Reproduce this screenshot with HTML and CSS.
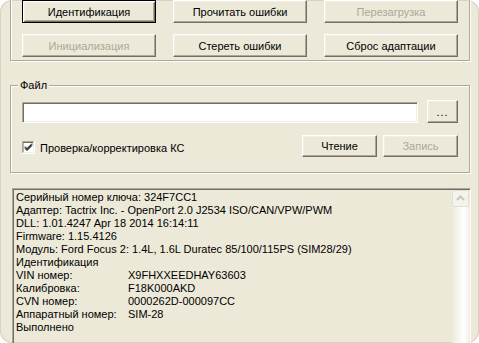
FILE: index.html
```html
<!DOCTYPE html>
<html lang="ru">
<head>
    <meta charset="UTF-8">
    <meta name="viewport" content="width=device-width, initial-scale=1.0">
    <title>Диагностика ЭБУ</title>
    <link rel="stylesheet" href="styles.css">
</head>
<body>
    <div class="frame">
        <div class="group group-top">
            <div class="btn-grid">
                <button class="btn btn-default">Идентификация</button>
                <button class="btn">Прочитать ошибки</button>
                <button class="btn" disabled>Перезагрузка</button>
                <button class="btn" disabled>Инициализация</button>
                <button class="btn">Стереть ошибки</button>
                <button class="btn">Сброс адаптации</button>
            </div>
        </div>

        <fieldset class="group group-file">
            <legend>Файл</legend>
            <div class="file-row">
                <input class="textbox" type="text">
                <button class="btn btn-browse">...</button>
            </div>
            <div class="check-row">
                <label class="check">
                    <svg class="check-box" width="13" height="13" viewBox="0 0 13 13">
                        <rect x="0" y="0" width="13" height="13" fill="#ffffff"/>
                        <path d="M0 12.5V0.5H12.5" fill="none" stroke="#aca899"/>
                        <path d="M1 11.5V1.5H11.5" fill="none" stroke="#716f64"/>
                        <path d="M0.5 13V12.5H12.5V0" fill="none" stroke="#ffffff"/>
                        <path d="M1.5 12V11.5H11.5V1" fill="none" stroke="#f1efe2"/>
                        <path d="M3 5.5L5 7.5L10 2.5M3 6.5L5 8.5L10 3.5M3 7.5L5 9.5L10 4.5" fill="none" stroke="#000000"/>
                    </svg>
                    Проверка/корректировка КС
                </label>
                <div class="check-buttons">
                    <button class="btn btn-small">Чтение</button>
                    <button class="btn btn-small" disabled>Запись</button>
                </div>
            </div>
        </fieldset>

        <div class="log">
            <div class="log-text">
                <div>Серийный номер ключа: 324F7CC1</div>
                <div>Адаптер: Tactrix Inc. - OpenPort 2.0 J2534 ISO/CAN/VPW/PWM</div>
                <div>DLL: 1.01.4247 Apr 18 2014 16:14:11</div>
                <div>Firmware: 1.15.4126</div>
                <div>Модуль: Ford Focus 2: 1.4L, 1.6L Duratec 85/100/115PS (SIM28/29)</div>
                <div>Идентификация</div>
                <div class="kv"><span>VIN номер:</span><span>X9FHXXEEDHAY63603</span></div>
                <div class="kv"><span>Калибровка:</span><span>F18K000AKD</span></div>
                <div class="kv"><span>CVN номер:</span><span>0000262D-000097CC</span></div>
                <div class="kv"><span>Аппаратный номер:</span><span>SIM-28</span></div>
                <div>Выполнено</div>
            </div>
            <div class="scrollbar">
                <svg class="scroll-up" width="17" height="17" viewBox="0 0 17 17">
                    <rect x="0.5" y="0.5" width="16" height="16" rx="2" fill="#f4f3ee" stroke="#e2dfd2"/>
                    <path d="M5 10L8.5 6.5L12 10" fill="none" stroke="#c9c7ba" stroke-width="2"/>
                </svg>
                <div class="scroll-track"></div>
            </div>
        </div>
    </div>
</body>
</html>
```

FILE: styles.css
```css
body {
    margin: 0;
    padding: 0;
    background-color: #ffffff;
    font-family: "Liberation Sans", Arial, sans-serif;
    font-size: 11px;
    color: #000000;
}

.frame {
    width: 479px;
    height: 343px;
    box-sizing: border-box;
    padding: 0 9px 0 10px;
    overflow: hidden;
    background-color: #ece9d8;
    border-radius: 12px;
    box-shadow: inset 0 0 0 1px #d6d3c4;
}

/* etched group borders */
.group {
    border: 1px solid #aca899;
    box-shadow: inset 1px 1px 0 #ffffff, 1px 1px 0 #ffffff;
}

.group-top {
    margin-top: -10px;
    padding: 9px 11px 3px 11px;
}

.btn-grid {
    display: grid;
    grid-template-columns: repeat(3, 134px);
    grid-auto-rows: 23px;
    column-gap: 17px;
    row-gap: 11px;
}

.btn {
    font-family: inherit;
    font-size: 11px;
    color: #000000;
    background-color: #ece9d8;
    border: 1px solid;
    border-color: #ffffff #716f64 #716f64 #ffffff;
    box-shadow: inset -1px -1px 0 #aca899, inset 1px 1px 0 #f1efe2;
    padding: 0;
    margin: 0;
    height: 23px;
    box-sizing: border-box;
}

.btn-default {
    border-color: #000000;
    box-shadow: inset 1px 1px 0 #ffffff, inset -1px -1px 0 #716f64, inset 2px 2px 0 #f1efe2, inset -2px -2px 0 #aca899;
}

.btn:disabled {
    color: #aca899;
}

.group-file {
    margin: 18px 0 0 0;
    padding: 8px 11px 15px 11px;
    min-width: 0;
}

.group-file legend {
    padding: 0 2px;
    margin-left: -4px;
    line-height: 13px;
    background-color: #ece9d8;
}

.file-row {
    display: flex;
    align-items: flex-start;
}

.textbox {
    width: 396px;
    height: 21px;
    margin: 2px 0 0 0;
    padding: 0 3px;
    box-sizing: border-box;
    background-color: #ffffff;
    border: 1px solid;
    border-color: #aca899 #ffffff #ffffff #aca899;
    box-shadow: inset 1px 1px 0 #716f64, inset -1px -1px 0 #f1efe2;
    font-family: inherit;
    font-size: 11px;
    outline: none;
}

.btn-browse {
    width: 31px;
    margin-left: 9px;
    letter-spacing: 1px;
}

.check-row {
    display: flex;
    align-items: center;
    margin-top: 12px;
}

.check {
    display: flex;
    align-items: center;
    gap: 5px;
    margin-top: 3px;
}

.check-box {
    display: block;
}

.check-buttons {
    display: flex;
    gap: 6px;
    margin-left: auto;
}

.btn-small {
    width: 75px;
    height: 22px;
}

.log {
    display: flex;
    width: 459px;
    height: 170px;
    margin: 15px 0 0 2px;
    box-sizing: border-box;
    border: 1px solid;
    border-color: #aca899 #ffffff #ffffff #aca899;
    box-shadow: inset 1px 1px 0 #716f64, inset -1px -1px 0 #f1efe2;
    padding: 1px;
}

.log-text {
    flex: 1;
    padding: 1px 2px;
    line-height: 13px;
    white-space: nowrap;
    overflow: hidden;
}

.kv {
    display: grid;
    grid-template-columns: 112px auto;
}

.scrollbar {
    width: 17px;
    display: flex;
    flex-direction: column;
}

.scroll-up {
    display: block;
}

.scroll-track {
    flex: 1;
    background: linear-gradient(90deg, #ece9d8 0%, #f6f5ef 35%, #ffffff 70%, #f2f1ea 100%);
}
```
